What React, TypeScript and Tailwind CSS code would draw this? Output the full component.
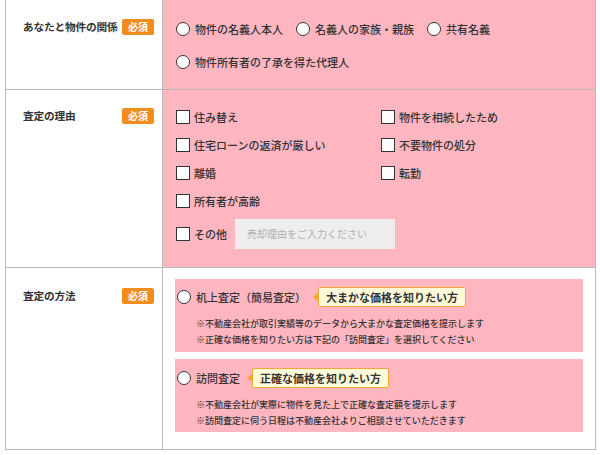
import React from "react";

const font = { fontFamily: '"Noto Sans CJK JP", "Noto Sans", sans-serif' };

function Badge() {
  return (
    <span className="inline-flex h-[16px] w-[32px] shrink-0 items-center justify-center rounded-[2px] bg-[#f18d1d] text-[10px] font-bold leading-none text-white">
      必須
    </span>
  );
}

function Radio({ label }: { label: string }) {
  return (
    <label className="flex items-center gap-[5px]">
      <span className="h-[14px] w-[14px] shrink-0 rounded-full border-[1.5px] border-[#333] bg-white" />
      <span>{label}</span>
    </label>
  );
}

function Check({ label }: { label: string }) {
  return (
    <label className="flex items-center gap-[4px]">
      <span className="h-[14px] w-[14px] shrink-0 border border-[#333] bg-white" />
      <span>{label}</span>
    </label>
  );
}

function Tip({ text }: { text: string }) {
  return (
    <div className="relative ml-[12px] flex h-[20px] items-center rounded-[2px] border border-[#f5a535] bg-[#fffbd9] px-[7px] text-[11px] font-semibold text-[#333]">
      <span className="absolute left-[-6px] top-1/2 h-0 w-0 -translate-y-1/2 border-y-[4px] border-r-[5px] border-y-transparent border-r-[#f5a535]" />
      {text}
    </div>
  );
}

function Label({ text }: { text: string }) {
  return (
    <div className="flex items-center justify-between pl-[17px] pr-[8px]">
      <span className="whitespace-nowrap text-[10.7px] font-bold tracking-[-0.2px] text-[#333]">{text}</span>
      <Badge />
    </div>
  );
}

export default function App() {
  return (
    <div style={font} className="h-[455px] w-[600px] bg-white font-medium text-[#333]">
      <div className="ml-[5px] w-[591px] border-x border-b border-[#bbb]">
        {/* Row 1 */}
        <div className="grid h-[90px] grid-cols-[157px_1fr] border-b border-[#bbb]">
          <div className="border-r border-[#bbb] pt-[19px]">
            <Label text="あなたと物件の関係" />
          </div>
          <div className="flex flex-col gap-[17px] bg-[#ffb6c1] pl-[13px] pt-[21px] text-[11px] leading-[16px]">
            <div className="flex items-center gap-[13px]">
              <Radio label="物件の名義人本人" />
              <Radio label="名義人の家族・親族" />
              <Radio label="共有名義" />
            </div>
            <Radio label="物件所有者の了承を得た代理人" />
          </div>
        </div>
        {/* Row 2 */}
        <div className="grid h-[178px] grid-cols-[157px_1fr] border-b border-[#bbb]">
          <div className="border-r border-[#bbb] pt-[18px]">
            <Label text="査定の理由" />
          </div>
          <div className="bg-[#ffb6c1] pl-[13px] pt-[19px] text-[11px] leading-[16px]">
            <div className="grid grid-cols-[205px_1fr] gap-y-[12px]">
              <Check label="住み替え" />
              <Check label="物件を相続したため" />
              <Check label="住宅ローンの返済が厳しい" />
              <Check label="不要物件の処分" />
              <Check label="離婚" />
              <Check label="転勤" />
              <Check label="所有者が高齢" />
              <div />
            </div>
            <div className="mt-[10px] flex items-center">
              <Check label="その他" />
              <div className="ml-[8px] flex h-[30px] w-[160px] items-center bg-[#eeeeee] pl-[12px] text-[10px] font-normal text-[#b0b0b0]">
                売却理由をご入力ください
              </div>
            </div>
          </div>
        </div>
        {/* Row 3 */}
        <div className="grid grid-cols-[157px_1fr]">
          <div className="border-r border-[#bbb] pt-[20px]">
            <Label text="査定の方法" />
          </div>
          <div className="flex flex-col gap-[7px] px-[12px] pb-[17px] pt-[11px] text-[11px]">
            <div className="h-[73px] bg-[#ffb6c1] pl-[2px] pt-[8px]">
              <div className="flex items-center">
                <Radio label="机上査定（簡易査定）" />
                <Tip text="大まかな価格を知りたい方" />
              </div>
              <div className="mt-[9px] pl-[19px] text-[9px] leading-[16px]">
                <div>※不動産会社が取引実績等のデータから大まかな査定価格を提示します</div>
                <div>※正確な価格を知りたい方は下記の「訪問査定」を選択してください</div>
              </div>
            </div>
            <div className="h-[73px] bg-[#ffb6c1] pl-[2px] pt-[9px]">
              <div className="flex items-center">
                <Radio label="訪問査定" />
                <Tip text="正確な価格を知りたい方" />
              </div>
              <div className="mt-[9px] pl-[19px] text-[9px] leading-[16px]">
                <div>※不動産会社が実際に物件を見た上で正確な査定額を提示します</div>
                <div>※訪問査定に伺う日程は不動産会社よりご相談させていただきます</div>
              </div>
            </div>
          </div>
        </div>
      </div>
    </div>
  );
}
